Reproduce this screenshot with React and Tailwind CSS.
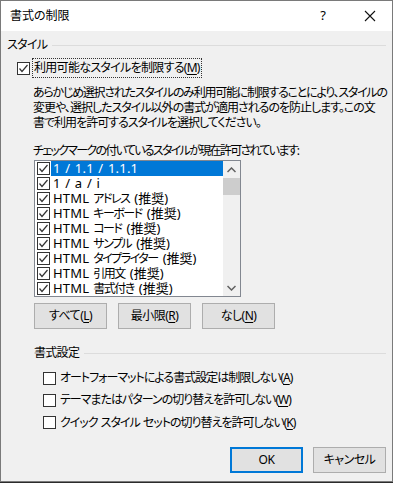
import React from "react";

const font = {
  fontFamily: "'Noto Sans', 'Noto Sans CJK JP', sans-serif",
};

const Check = ({ checked }) => (
  <span className="w-[13px] h-[13px] border border-[#333333] bg-white flex items-center justify-center shrink-0">
    {checked && (
      <svg width="11" height="11" viewBox="0 0 11 11">
        <polyline points="1.5,5.5 4,8.5 9.5,2" fill="none" stroke="#333333" strokeWidth="1.2" />
      </svg>
    )}
  </span>
);

const U = ({ children }) => <span className="underline underline-offset-2">{children}</span>;

const Header = ({ title, pl }) => (
  <div className={`flex items-center h-[16px] ${pl}`}>
    <span className="tracking-[-0.7px]">{title}</span>
    <span className="flex-1 h-px bg-[#dcdcdc] ml-[5px] mr-[6px]"></span>
  </div>
);

const Btn = ({ children, focus }) => (
  <button
    className={`w-[73px] h-[26px] bg-[#e1e1e1] flex items-center justify-center text-black tracking-[-0.5px] ${
      focus ? "border-2 border-[#0078d7]" : "border border-[#adadad]"
    }`}
  >
    {children}
  </button>
);

// [latin part, japanese name]
const styles = [
  ["1 / 1.1 / 1.1.1", ""],
  ["1 / a / i", ""],
  ["HTML", "アドレス"],
  ["HTML", "キーボード"],
  ["HTML", "コード"],
  ["HTML", "サンプル"],
  ["HTML", "タイプライター"],
  ["HTML", "引用文"],
  ["HTML", "書式付き"],
];

const App = () => {
  return (
    <div
      className="w-[393px] h-[483px] bg-[#2b2b2b] text-[12px] text-black [font-feature-settings:'palt']"
      style={font}
    >
      <div className="w-[393px] h-[482px] border border-[#7a7a7a] bg-[#f0f0f0] flex flex-col">
        {/* title bar */}
        <div className="h-[30px] bg-white flex items-center pl-[9px] shrink-0">
          <span className="flex-1">書式の制限</span>
          <span className="w-[20px] text-center text-[13px] mr-[31px]">?</span>
          <svg width="12" height="12" viewBox="0 0 12 12" className="mr-[16px]">
            <path d="M1 1 L11 11 M11 1 L1 11" stroke="#111" strokeWidth="1.1" />
          </svg>
        </div>

        <div className="pt-[6px]">
          <Header title="スタイル" pl="pl-[6px]" />

          <div className="flex items-center h-[20px] mt-[5px] pl-[16px]">
            <Check checked />
            <span className="ml-[2px] px-[1px] h-[20px] flex items-center border border-dotted border-[#333] tracking-[-0.7px]">
              利用可能なスタイルを制限する(<U>M</U>)
            </span>
          </div>

          <p className="pl-[32px] mt-[7px] leading-[15px] whitespace-nowrap tracking-[-1px]">
            <span className="tracking-[-1.25px]">
              あらかじめ選択されたスタイルのみ利用可能に制限することにより、スタイルの
            </span>
            <br />
            変更や、選択したスタイル以外の書式が適用されるのを防止します。この文
            <br />
            書で利用を許可するスタイルを選択してください。
          </p>

          <p className="pl-[32px] mt-[13px] leading-[15px] whitespace-nowrap tracking-[-1.7px]">
            チェックマークの付いているスタイルが現在許可されています:
          </p>

          {/* list */}
          <div className="ml-[33px] mt-[2px] w-[207px] h-[137px] border border-[#828790] bg-white flex">
            <div className="flex-1 pl-[2px] overflow-hidden">
              {styles.map(([latin, jp], i) => (
                <div key={latin + jp} className="h-[15px] flex items-center leading-[15px]">
                  <Check checked />
                  <span
                    className={`ml-[1px] h-[15px] flex-1 pl-[2px] flex items-center whitespace-nowrap text-[13px] leading-[15px] ${
                      i === 0 ? "bg-[#0078d7] text-white" : ""
                    }`}
                  >
                    <span className="tracking-[0.2px] [word-spacing:1px]">{latin}</span>
                    {jp && (
                      <>
                        <span className="ml-[4px] text-[12px] tracking-[-1.5px]">{jp}</span>
                        <span className="ml-[5px]">(推奨)</span>
                      </>
                    )}
                  </span>
                </div>
              ))}
            </div>
            <div className="w-[17px] bg-[#f0f0f0] flex flex-col items-center">
              <div className="h-[17px] flex items-center justify-center">
                <svg width="9" height="6" viewBox="0 0 9 6">
                  <polyline points="0.5,5 4.5,1 8.5,5" fill="none" stroke="#606060" strokeWidth="1.5" />
                </svg>
              </div>
              <div className="w-[17px] h-[17px] bg-[#cdcdcd]"></div>
              <div className="flex-1"></div>
              <div className="h-[17px] flex items-center justify-center">
                <svg width="9" height="6" viewBox="0 0 9 6">
                  <polyline points="0.5,1 4.5,5 8.5,1" fill="none" stroke="#606060" strokeWidth="1.5" />
                </svg>
              </div>
            </div>
          </div>

          <div className="flex gap-[11px] ml-[33px] mt-[6px]">
            <Btn>
              すべて(<U>L</U>)
            </Btn>
            <Btn>
              最小限(<U>R</U>)
            </Btn>
            <Btn>
              なし(<U>N</U>)
            </Btn>
          </div>

          <div className="mt-[16px]">
            <Header title="書式設定" pl="pl-[33px]" />
          </div>

          <div className="pl-[42px] mt-[6px] flex flex-col tracking-[-1px]">
            <div className="h-[22px] flex items-center gap-[4px]">
              <Check />
              <span>
                オートフォーマットによる書式設定は制限しない(<U>A</U>)
              </span>
            </div>
            <div className="h-[22px] flex items-center gap-[4px]">
              <Check />
              <span>
                テーマまたはパターンの切り替えを許可しない(<U>W</U>)
              </span>
            </div>
            <div className="h-[23px] flex items-center gap-[4px]">
              <Check />
              <span className="[word-spacing:1px]">
                クイック スタイル セットの切り替えを許可しない(<U>K</U>)
              </span>
            </div>
          </div>

          <div className="flex justify-end gap-[10px] mr-[6px] mt-[13px]">
            <Btn focus>OK</Btn>
            <Btn>キャンセル</Btn>
          </div>
        </div>
      </div>
    </div>
  );
};

export default App;
